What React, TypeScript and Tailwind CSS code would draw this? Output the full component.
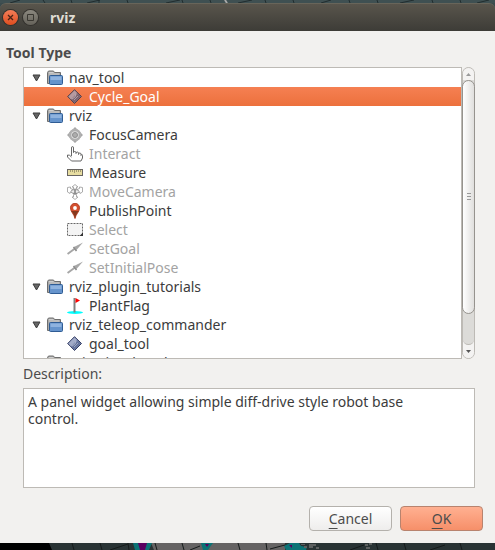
import React, { useState } from "react";

type IconName =
  | "folder" | "diamondRed" | "diamondBlue" | "focus" | "hand" | "ruler"
  | "move" | "pin" | "select" | "arrow" | "flag";

type Row = { label: string; icon: IconName; group?: boolean; disabled?: boolean };

const rows: Row[] = [
  { label: "nav_tool", icon: "folder", group: true },
  { label: "Cycle_Goal", icon: "diamondRed" },
  { label: "rviz", icon: "folder", group: true },
  { label: "FocusCamera", icon: "focus" },
  { label: "Interact", icon: "hand", disabled: true },
  { label: "Measure", icon: "ruler" },
  { label: "MoveCamera", icon: "move", disabled: true },
  { label: "PublishPoint", icon: "pin" },
  { label: "Select", icon: "select", disabled: true },
  { label: "SetGoal", icon: "arrow", disabled: true },
  { label: "SetInitialPose", icon: "arrow", disabled: true },
  { label: "rviz_plugin_tutorials", icon: "folder", group: true },
  { label: "PlantFlag", icon: "flag" },
  { label: "rviz_teleop_commander", icon: "folder", group: true },
  { label: "goal_tool", icon: "diamondBlue" },
  { label: "rviz_visual_tools", icon: "folder", group: true },
];

function Diamond({ base, light, dark, edge }: { base: string; light: string; dark: string; edge: string }) {
  return (
    <>
      <path d="M7.500 0.700 14.500 7.500 7.500 14.500.700 7.500Z" fill={base} stroke={edge} />
      <path d="M7.500 1.500 10 4 4 10.500 1.500 7.500Z" fill={light} />
      <path d="M7.500 13.500 13.500 7.500 11 5 5 11Z" fill={dark} />
      <path d="m5 10 3-2 1-3M7 11l4-4" stroke="#e2dfe8" strokeOpacity=".45" fill="none" />
    </>
  );
}

function Icon({ name }: { name: IconName }) {
  return (
    <svg viewBox="0 0 16 16" className="size-4 shrink-0" fill="none" aria-hidden="true">
      {name === "folder" && (
        <>
          <path d="M.5 13.500V2.500L1.500 1h5l1 1.500h6V13.500Z" fill="#a9a9a9" stroke="#6e6e6e" />
          <path d="M2 2.500h4.500M2 4h10" stroke="#cfcfcf" />
          <rect x="2.500" y="5.500" width="13" height="9" rx="1" fill="#6694cc" stroke="#2f5c94" />
          <path d="M3.500 6.500h11v3.500h-11z" fill="#8fb3df" />
        </>
      )}
      {name === "diamondRed" && <Diamond base="#8c7078" light="#b59aa0" dark="#7d636e" edge="#54404c" />}
      {name === "diamondBlue" && <Diamond base="#7381a8" light="#a2abc8" dark="#64739c" edge="#343d63" />}
      {name === "focus" && (
        <>
          <path d="M8 0l3 3H5ZM8 16l3-3H5ZM0 8l3-3v6ZM16 8l-3-3v6Z" fill="#a6a6a6" />
          <circle cx="8" cy="8" r="5" fill="#e2e2e2" stroke="#b0b0b0" strokeWidth="2.500" />
          <circle cx="8" cy="8" r="2.500" fill="#adadad" stroke="#8e8e8e" />
        </>
      )}
      {name === "hand" && (
        <path
          d="M4.500 10V2q0-1.500 1-1.500t1 1.500v4.500q0-1 1.200-1t1.300 1v1q0-1.500 1.300-1.500t1.200 1.500v1q0-1.500 1.300-1.500t1.200 1.500v1q0-1 .75-1t.75 1V12l-1.500 3H4.500L.5 11V9q2-.5 4 2"
          fill="#fff" stroke="#666" strokeLinejoin="round"
        />
      )}
      {name === "ruler" && (
        <>
          <rect x=".5" y="4.500" width="15" height="6" fill="#e7dda1" stroke="#686561" />
          <path d="M3.500 5v2M5.500 5v2M7.500 5v3M9.500 5v2M11.500 5v2M13.500 5v2" stroke="#a39b72" />
        </>
      )}
      {name === "move" && (
        <>
          <g stroke="#999" strokeWidth=".8" fill="#fff">
            <path d="M8 .5 11 3H9.500v2h-3V3H5Z" />
            <path d="M8 15.500 5 13h1.500v-2.500h3V13H11Z" />
            <path d="M.5 3.500 3.500 3v1.500L6 5.500v3L3.500 8 3 9.500.5 8Z" />
            <path d="m15.500 3.500-3-.5v1.500L10 5.500v3l2.500-.5.5 1.500L15.500 8Z" />
          </g>
          <ellipse cx="8" cy="7.500" rx="4" ry="2" fill="#eee" stroke="#888" strokeWidth=".8" />
          <path d="M6 9.500h4M7.500 6h1v3h-1z" stroke="#888" strokeWidth=".8" />
        </>
      )}
      {name === "pin" && (
        <>
          <path d="M8 15.500C7.500 11.500 3.500 9 3.500 4.800a4.500 4.500 0 0 1 9 0C12.500 9 8.500 11.500 8 15.500Z" fill="#d4502f" stroke="#b34127" />
          <path d="M4.500 8h7Q8.800 11 8 15 7.200 11 4.500 8Z" fill="#85391d" />
          <circle cx="8" cy="5" r="1.900" fill="#fff" />
        </>
      )}
      {name === "select" && (
        <>
          <rect x=".5" y="1.500" width="15" height="12" fill="#f4f4f4" stroke="#666" strokeDasharray="2 1" />
          <path d="M16 10.500v3.500h-3.500Z" fill="#333" />
        </>
      )}
      {name === "arrow" && (
        <>
          <path d="M.5 13 8 7.500" stroke="#a6a6a6" strokeWidth="2" />
          <path d="M16 1.500 9.500 9 7 6Z" fill="#a8a8a8" />
          <path d="m6.500 6 3 4" stroke="#8c8c8c" strokeWidth="1.500" />
        </>
      )}
      {name === "flag" && (
        <>
          <ellipse cx="8" cy="14.500" rx="8" ry="1.500" fill="#0ff" />
          <path d="M7.500 0v14.500" stroke="#808080" strokeWidth="2" />
          <path d="M8.500 0 13 2.500 8.500 5Z" fill="#f00" />
        </>
      )}
    </svg>
  );
}

function TopBackdrop() {
  return (
    <svg viewBox="0 0 495 4" preserveAspectRatio="none" className="block h-[3px] w-full bg-[#3f5052]" aria-hidden="true">
      <path d="M10 4 20 0M43 0l2 4M71 0l1 4M87 4 100 0M99 0v4M127 0l1 4M166 4l14-4M182 0l1 4M210 0l1 4M238 4l14-4M265 0l1 4M293 0l1 4M321 4l10-4M349 0l1 4M377 0l1 4M400 4l14-4M432 0l1 4M460 0l1 4M477 4l12-4" stroke="#1d2829" fill="none" />
      <path d="m225 0 2 4" stroke="#aaa" strokeWidth="2" />
    </svg>
  );
}

function BottomBackdrop() {
  return (
    <svg viewBox="0 0 495 7" preserveAspectRatio="none" className="block h-[7px] w-full bg-[#293334]" aria-hidden="true">
      <path d="M0 0h49l3 7H0Z" fill="#000" />
      <path d="M151 0h134v7H154Z" fill="#656363" />
      <path d="M133 0h19l-3 7h-14ZM201 0h12l-3 4-2 3h-5ZM284 3l6-3h9l2 3 6 1-1 3h-20Z" fill="#0b7375" />
      <path d="M138 0h9l-2 7h-5ZM205 1h4l-2 3ZM289 2h3v3Z" fill="#5a0060" />
      <path d="M72 0l2 7M100 0l2 7M110 7l18-6M128 0l1 7M155 0l2 7M182 0l2 7M190 7l10-4M238 0l2 7M266 0l1 7M270 6l15-4M350 7l14-5M376 0l2 7M404 0l2 7M430 7l15-5M460 0l2 7" stroke="#151a1a" fill="none" />
      <path d="M301 1h4v1h-4zM309 1h7v2h-3v2h-4zM304 3h3v2h-3zM316 4h3v2h-3zM365 1h3v2h-3zM369 0h3v2h-3zM366 4h4v2h-4z" fill="#5d6060" />
    </svg>
  );
}

export default function App() {
  const [selected, setSelected] = useState("Cycle_Goal");
  return (
    <div className="flex min-h-screen flex-col bg-[#3b4b4d] font-['Noto_Sans','Open_Sans',sans-serif] text-[14px] leading-[19px] text-[#3c3c3c]">
      <TopBackdrop />
      <header className="flex h-7 items-center gap-1 rounded-t-md border-t border-[#68655a] bg-linear-to-b from-[#59554c] to-[#3d3c37] px-[3px]">
        <button aria-label="Close" className="grid size-[15px] place-items-center rounded-full bg-linear-to-b from-[#f47d57] to-[#df4d1c] ring-1 ring-[#33312d]">
          <svg viewBox="0 0 7 7" className="size-[7px]"><path d="m1 1 5 5M6 1 1 6" stroke="#4a2518" strokeWidth="1.300" /></svg>
        </button>
        <button aria-label="Maximize" className="ml-px grid size-[15px] place-items-center rounded-full bg-linear-to-b from-[#8b887f] to-[#65625a] ring-1 ring-[#33312d]">
          <svg viewBox="0 0 7 7" className="size-[7px]"><path d="M.5.5h6v6h-6z" fill="none" stroke="#393731" /></svg>
        </button>
        <h1 className="ml-2 font-bold text-[#dfdbd2]">rviz</h1>
      </header>
      <main className="flex flex-1 flex-col bg-[#f2f1ef] pb-3">
        <h2 id="tool-type" className="px-[6px] pt-3 pb-[5px] font-bold text-[#4c4c4c]">Tool Type</h2>
        <section className="ml-[23px] mr-5 flex h-[292px]">
          <ul aria-labelledby="tool-type" className="min-w-0 flex-1 overflow-hidden border border-[#bdbab5] bg-white">
            {rows.map((row) => (
              <li key={row.label}>
                <button
                  disabled={row.disabled}
                  onClick={() => setSelected(row.label)}
                  className={`flex h-[19px] w-full items-center gap-[6px] text-left ${row.group ? "pl-2" : "pl-[43px]"} ${
                    selected === row.label
                      ? "bg-linear-to-b from-[#f58052] to-[#ec703c] text-white"
                      : row.disabled ? "text-[#a3a3a3]" : "text-[#3c3c3c]"
                  }`}
                >
                  {row.group && (
                    <svg viewBox="0 0 9 8" className="h-2 w-[9px] shrink-0" aria-hidden="true">
                      <path d="M1 1h7L4.500 7Z" fill="#666" stroke="#3c3c3c" />
                    </svg>
                  )}
                  <Icon name={row.icon} />
                  <span>{row.label}</span>
                </button>
              </li>
            ))}
          </ul>
          <div className="flex w-[13px] flex-col rounded-full border border-[#bdbab5] bg-[#dcdbd8]">
            <button aria-label="Scroll up" className="grid h-3 place-items-center rounded-t-full bg-[#f4f3f2]">
              <svg viewBox="0 0 5 3" className="h-[3px] w-[5px]"><path d="M0 3h5L2.500 0Z" fill="#999" /></svg>
            </button>
            <div className="-mx-px grid h-[234px] place-items-center rounded-full border border-[#96938e] bg-linear-to-r from-white to-[#e0dfdd]">
              <svg viewBox="0 0 4 8" className="h-2 w-1"><path d="M0 .5h4M0 3.500h4M0 6.500h4" stroke="#999" /></svg>
            </div>
            <div className="flex flex-1 flex-col rounded-b-full bg-[#f4f3f2]">
              <div className="flex-1 rounded-b-full border-b border-[#bdbab5] bg-[#dcdbd8]" />
              <button aria-label="Scroll down" className="grid h-[13px] place-items-center">
                <svg viewBox="0 0 5 3" className="h-[3px] w-[5px]"><path d="M0 0h5L2.500 3Z" fill="#555" /></svg>
              </button>
            </div>
          </div>
        </section>
        <label htmlFor="description" className="mt-[5px] ml-[23px] text-[#4c4c4c]">Description:</label>
        <textarea
          id="description"
          readOnly
          value="A panel widget allowing simple diff-drive style robot base control."
          className="mt-[5px] mr-5 ml-[23px] h-[100px] resize-none border border-[#bdbab5] bg-white py-1 pr-8 pl-1 leading-[17px] outline-none"
        />
        <div className="mt-[18px] mr-3 flex justify-end gap-2">
          <button className="h-[25px] w-[83px] rounded-sm border border-[#b4b1ac] bg-linear-to-b from-white to-[#eeedec] text-[#4c4c4c]">
            <span className="underline underline-offset-4">C</span>ancel
          </button>
          <button className="h-[25px] w-[83px] rounded-sm border border-[#b8836e] bg-linear-to-b from-[#ffb091] to-[#f68f69] text-[#4c4c4c]">
            <span className="underline underline-offset-4">O</span>K
          </button>
        </div>
      </main>
      <BottomBackdrop />
    </div>
  );
}
